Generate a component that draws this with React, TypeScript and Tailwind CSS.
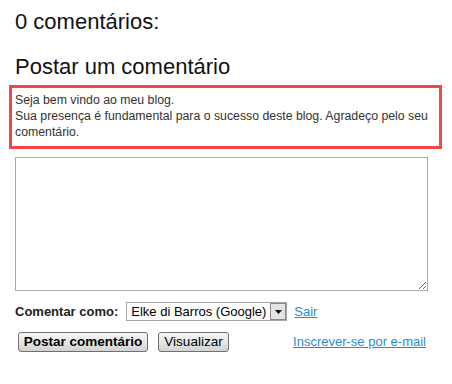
export default function App() {
  return (
    <div
      className="w-[452px] h-[384px] bg-white text-[#222] overflow-hidden"
      style={{ fontFamily: '"Liberation Sans", Arial, sans-serif' }}
    >
      {/* Headings */}
      <h4 className="ml-[15px] pt-[9px] text-[22px] leading-[25px] font-normal text-[#111]">
        0 comentários:
      </h4>
      <h4 className="ml-[15px] mt-[20px] text-[22px] leading-[25px] font-normal text-[#111]">
        Postar um comentário
      </h4>

      {/* Message box */}
      <div className="ml-[9px] mt-[6px] w-[433px] border-[3px] border-[#f44646] pl-[3px] pt-[4px] pb-[6px] text-[12.3px] leading-[16px] text-[#333]">
        Seja bem vindo ao meu blog.
        <br />
        Sua presença é fundamental para o sucesso deste blog. Agradeço pelo seu comentário.
      </div>

      {/* Textarea */}
      <textarea className="block ml-[15px] mt-[8px] w-[413px] h-[134px] border border-[#aaa] bg-white outline-none" />

      {/* Comment as */}
      <div className="flex items-center ml-[15px] mt-[11px] h-[19px] text-[13px]">
        <span className="font-bold text-[#222] whitespace-nowrap">Comentar como:</span>
        <div className="ml-[8px] flex items-center w-[161px] h-[19px] border border-[#a5a5a5] bg-white">
          <span className="flex-1 pl-[4px] text-black text-[13px] leading-[17px] whitespace-nowrap overflow-hidden">
            Elke di Barros (Google)
          </span>
          <div className="w-[16px] h-[17px] shrink-0 flex items-center justify-center bg-[#e4e4e4] border border-[#8a8a8a]">
            <svg width="7" height="4" viewBox="0 0 7 4">
              <path d="M0 0h7L3.5 4z" fill="#111" />
            </svg>
          </div>
        </div>
        <a href="#" className="ml-[7px] text-[#2a8ad0] underline">
          Sair
        </a>
      </div>

      {/* Actions */}
      <div className="flex items-center ml-[18px] mt-[11px] w-[408px] text-[13px]">
        <button className="h-[20px] w-[130px] rounded-[3px] border border-[#707070] bg-gradient-to-b from-[#f6f6f6] via-[#e6e6e6] to-[#d2d2d2] font-bold text-black text-[13.5px] leading-[18px] whitespace-nowrap">
          Postar comentário
        </button>
        <button className="ml-[10px] h-[20px] w-[71px] rounded-[3px] border border-[#707070] bg-gradient-to-b from-[#f6f6f6] via-[#e6e6e6] to-[#d2d2d2] text-black text-[13.5px] leading-[18px]">
          Visualizar
        </button>
        <a href="#" className="ml-auto text-[#2a8ad0] underline whitespace-nowrap">
          Inscrever-se por e-mail
        </a>
      </div>
    </div>
  );
}
